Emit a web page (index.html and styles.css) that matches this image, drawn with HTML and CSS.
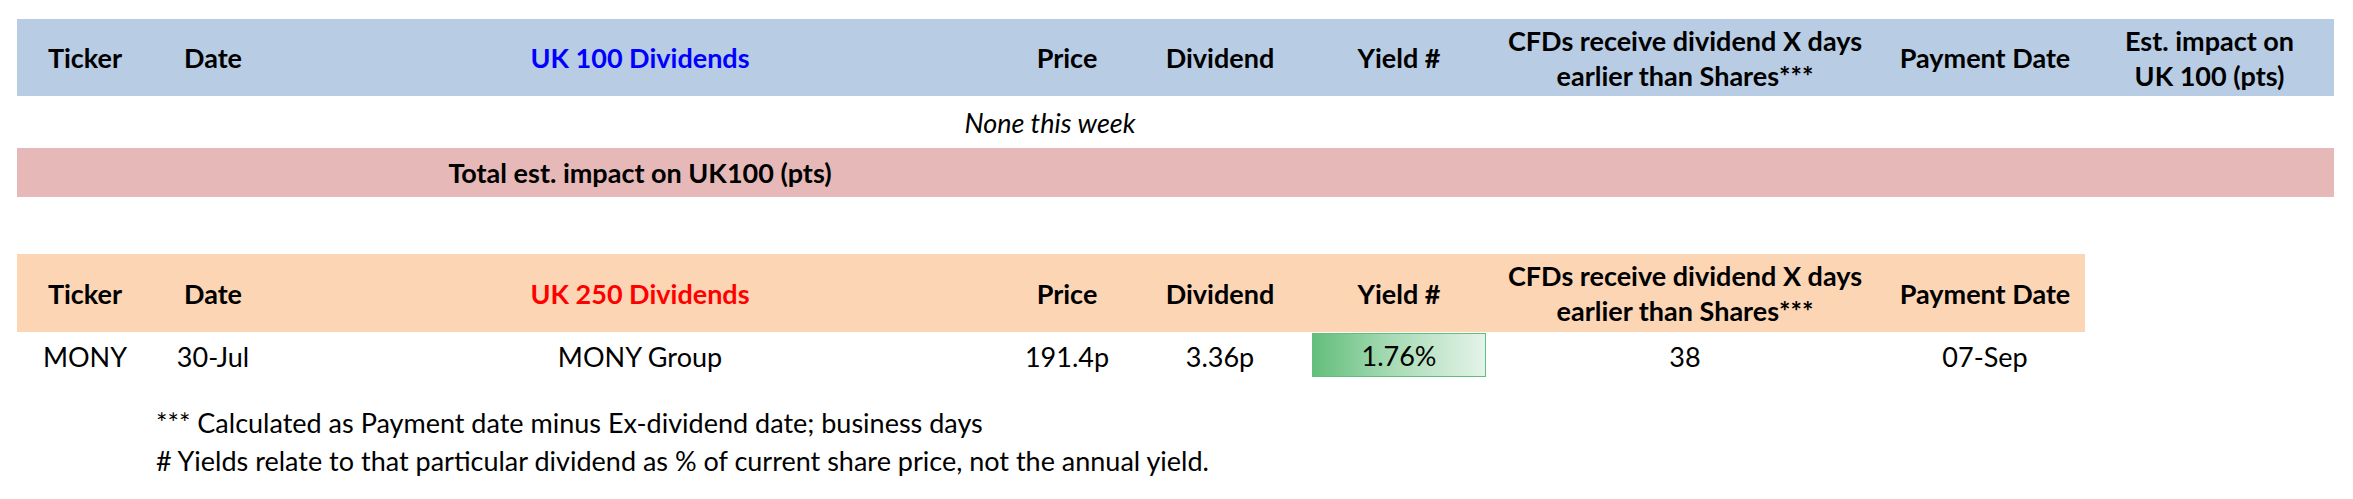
FILE: index.html
```html
<!DOCTYPE html>
<html lang="en">
<head>
<meta charset="utf-8">
<title>Dividends</title>
<link rel="stylesheet" href="styles.css">
</head>
<body>
<div class="sheet">
  <div class="grid grid-uk100">
    <div class="row head blue">
      <div class="c">Ticker</div>
      <div class="c">Date</div>
      <div class="c title-blue">UK 100 Dividends</div>
      <div class="c">Price</div>
      <div class="c">Dividend</div>
      <div class="c">Yield #</div>
      <div class="c two">CFDs receive dividend X days<br>earlier than Shares***</div>
      <div class="c">Payment Date</div>
      <div class="c two">Est. impact on<br>UK 100 (pts)</div>
    </div>
    <div class="row none">
      <div class="c span-all"><em>None this week</em></div>
    </div>
    <div class="row total pink">
      <div class="c"></div>
      <div class="c"></div>
      <div class="c bold">Total est. impact on UK100 (pts)</div>
      <div class="c"></div><div class="c"></div><div class="c"></div><div class="c"></div><div class="c"></div><div class="c"></div>
    </div>
  </div>

  <div class="grid grid-uk250">
    <div class="row head peach">
      <div class="c">Ticker</div>
      <div class="c">Date</div>
      <div class="c title-red">UK 250 Dividends</div>
      <div class="c">Price</div>
      <div class="c">Dividend</div>
      <div class="c">Yield #</div>
      <div class="c two">CFDs receive dividend X days<br>earlier than Shares***</div>
      <div class="c">Payment Date</div>
    </div>
    <div class="row data">
      <div class="c">MONY</div>
      <div class="c">30-Jul</div>
      <div class="c">MONY Group</div>
      <div class="c">191.4p</div>
      <div class="c">3.36p</div>
      <div class="c yield"><span class="bar">1.76%</span></div>
      <div class="c">38</div>
      <div class="c">07-Sep</div>
    </div>
  </div>

  <div class="notes">
    <p>*** Calculated as Payment date minus Ex-dividend date; business days</p>
    <p># Yields relate to that particular dividend as % of current share price, not the annual yield.</p>
  </div>
</div>
</body>
</html>
```

FILE: styles.css
```css
html, body {
  margin: 0;
  padding: 0;
  background: #ffffff;
}
body {
  font-family: "Lato", "Open Sans", "Liberation Sans", sans-serif;
  font-size: 27px;
  color: #000000;
}
.sheet {
  padding: 19px 0 0 17px;
  width: 2317px;
}
.grid .row {
  display: grid;
}
.grid-uk100 .row {
  grid-template-columns: 136px 120px 734px 120px 186px 172px 400px 200px 249px;
}
.grid-uk250 .row {
  grid-template-columns: 136px 120px 734px 120px 186px 172px 400px 200px;
  width: 2068px;
}
.c {
  display: flex;
  align-items: center;
  justify-content: center;
  text-align: center;
  white-space: nowrap;
}
.head {
  height: 77px;
  font-weight: 700;
}
.head .two {
  line-height: 35px;
}
.blue { background: #b8cce4; }
.pink { background: #e6b8b7; }
.peach { background: #fcd5b4; }
.title-blue { color: #0000ff; }
.title-red { color: #ff0000; }
.none {
  height: 52px;
}
.none .span-all {
  grid-column: 1 / -1;
  padding-right: 251px;
}
.none em {
  font-style: italic;
}
.total {
  height: 49px;
}
.bold { font-weight: 700; }
.grid-uk250 {
  margin-top: 57px;
}
.grid-uk250 .head {
  height: 78px;
}
.data {
  height: 48px;
}
.yield {
  align-items: flex-start;
}
.bar {
  display: flex;
  align-items: center;
  justify-content: center;
  box-sizing: border-box;
  width: 174px;
  height: 44px;
  margin-top: 1px;
  margin-left: -2px;
  margin-right: -2px;
  border: 1px solid #63be7b;
  background: linear-gradient(to right, #63be7b 0%, #a6dab4 45%, #e4f3e8 100%);
}
.notes {
  padding-left: 139px;
  margin-top: 24px;
}
.notes p {
  margin: 0;
  height: 38px;
  line-height: 38px;
}
```
